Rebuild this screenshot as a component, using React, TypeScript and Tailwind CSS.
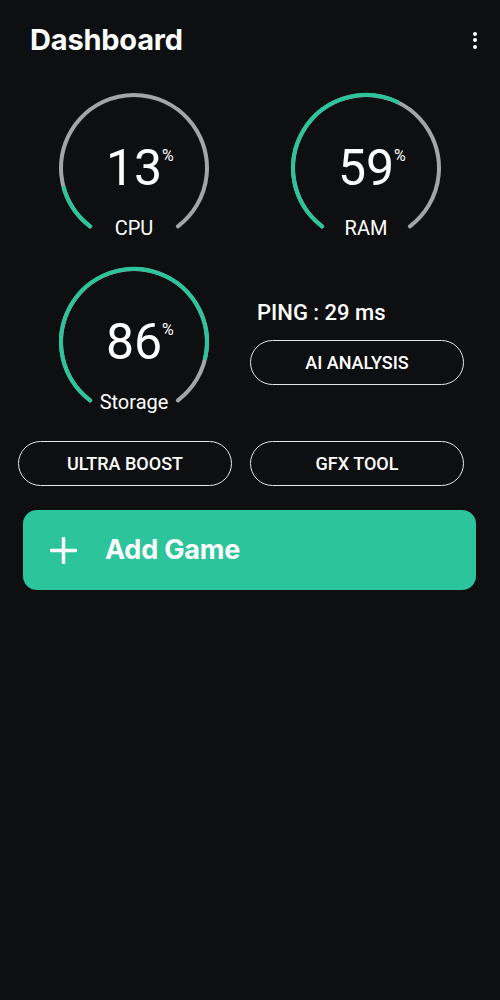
import React from 'react';

const GREEN = '#2cc49b';

interface GaugeProps {
  value: number;
  label: string;
}

const R = 73;
const C = 76;
const START = 37;
const SWEEP = 286;

function point(a: number) {
  const rad = (a * Math.PI) / 180;
  return { x: C - R * Math.sin(rad), y: C + R * Math.cos(rad) };
}

function arc(from: number, to: number) {
  const s = point(from);
  const e = point(to);
  const large = to - from > 180 ? 1 : 0;
  return `M ${s.x} ${s.y} A ${R} ${R} 0 ${large} 1 ${e.x} ${e.y}`;
}

const Gauge: React.FC<GaugeProps> = ({ value, label }) => {
  const end = START + (SWEEP * value) / 100;
  return (
    <div className="relative w-[152px] h-[152px]">
      <svg width="152" height="152" viewBox="0 0 152 152">
        <path d={arc(START, START + SWEEP)} fill="none" stroke="#a5a5a5" strokeWidth="4" strokeLinecap="round" />
        <path d={arc(START, end)} fill="none" stroke={GREEN} strokeWidth="4" strokeLinecap="round" />
      </svg>
      <div className="absolute inset-x-0 top-[50px] flex justify-center">
        <span className="relative text-[50px] leading-[52px] text-white font-normal">
          {value}
          <span className="absolute left-full top-[6px] text-[16px] leading-none">%</span>
        </span>
      </div>
      <div className="absolute inset-x-0 top-[124px] text-center text-[20px] leading-[24px] text-white">
        {label}
      </div>
    </div>
  );
};

const OutlineButton: React.FC<{ label: string }> = ({ label }) => (
  <button className="w-[214px] h-[45px] rounded-full border-[1.5px] border-[#e6e6e6] text-white text-[18px] font-medium">
    {label}
  </button>
);

export default function App() {
  return (
    <div className="min-h-screen bg-[#0d0f10] pt-[22px] text-white" style={{ fontFamily: 'Roboto, "Liberation Sans", sans-serif' }}>
      <header className="flex items-center justify-between h-[36px] pl-[30px] pr-[23px]">
        <h1 className="text-[29px] font-bold tracking-[-0.2px]" style={{ fontFamily: 'Inter, "Liberation Sans", sans-serif' }}>
          Dashboard
        </h1>
        <div className="flex flex-col gap-[2.5px]">
          <span className="w-[4px] h-[4px] rounded-full bg-white" />
          <span className="w-[4px] h-[4px] rounded-full bg-white" />
          <span className="w-[4px] h-[4px] rounded-full bg-white" />
        </div>
      </header>

      <div className="px-[18px] mt-[34px] flex flex-col gap-[22px]">
        <div className="flex gap-[18px]">
          <div className="w-[214px] pl-[40px]">
            <Gauge value={13} label="CPU" />
          </div>
          <div className="w-[214px] pl-[40px]">
            <Gauge value={59} label="RAM" />
          </div>
        </div>

        <div className="flex gap-[18px]">
          <div className="w-[214px] pl-[40px]">
            <Gauge value={86} label="Storage" />
          </div>
          <div className="w-[214px] flex flex-col pt-[34px]">
            <p className="pl-[7px] text-[22px] leading-[26px] font-medium">PING : 29 ms</p>
            <div className="mt-[14px]">
              <OutlineButton label="AI ANALYSIS" />
            </div>
          </div>
        </div>
      </div>

      <div className="px-[18px] mt-[23px] flex gap-[18px]">
        <OutlineButton label="ULTRA BOOST" />
        <OutlineButton label="GFX TOOL" />
      </div>

      <div className="px-[23px] pr-[24px] mt-[24px]">
        <button className="w-full h-[80px] rounded-[14px] flex items-center gap-[28px] pl-[27px]" style={{ backgroundColor: GREEN }}>
          <svg width="27" height="27" viewBox="0 0 27 27">
            <path d="M13.5 1.5v24M1.5 13.5h24" stroke="white" strokeWidth="3.5" strokeLinecap="round" />
          </svg>
          <span className="text-[27px] font-bold text-white tracking-[-0.2px]" style={{ fontFamily: 'Inter, "Liberation Sans", sans-serif' }}>
            Add Game
          </span>
        </button>
      </div>
    </div>
  );
}
